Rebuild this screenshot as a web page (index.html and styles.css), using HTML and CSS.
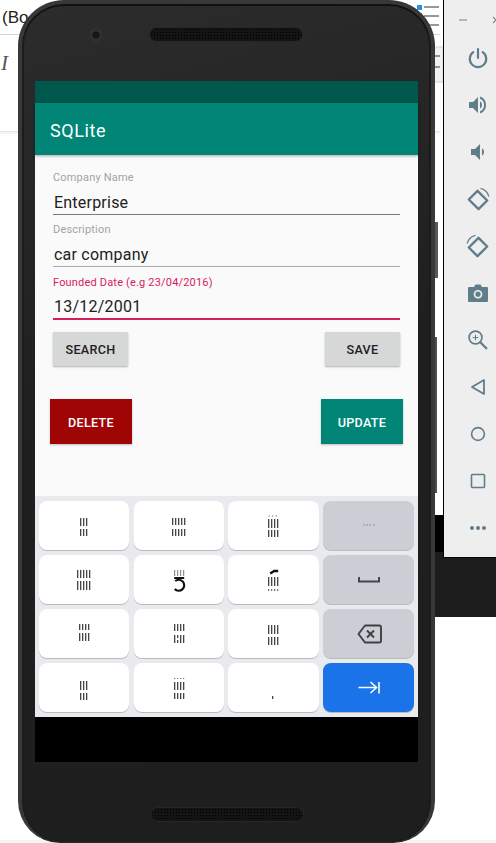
FILE: index.html
```html
<!DOCTYPE html>
<html lang="en">
<head>
<meta charset="utf-8">
<title>SQLite</title>
<link rel="stylesheet" href="styles.css">
</head>
<body>
<div class="desktop">
  <div class="doc">
    <div class="doc-tab"><span class="doc-title">(Bo</span></div>
    <div class="doc-sheet"><span class="doc-i">I</span></div>
  </div>
  <svg class="doc-tools" viewBox="0 0 30 90" width="30" height="90">
    <rect x="0" y="5" width="5" height="5" fill="#2b8fdc"/>
    <rect x="0" y="14" width="4" height="4" fill="#2b8fdc"/>
    <path d="M7 7h15M7 16h15M7 25h15" stroke="#333" stroke-width="1"/>
    <path d="M0 47h26v35H0z" fill="#f1f1f1" stroke="#bbb" stroke-width=".6"/>
    <path d="M18 56h5M18 67h5" stroke="#333" stroke-width="1"/>
  </svg>
  <div class="dark-strip"></div>
  <div class="black-strip"></div>
  <div class="foot-line"></div>

  <aside class="toolbar">
    <div class="win-controls">
      <span class="win-min"></span>
      <svg class="win-close" viewBox="0 0 8 8" width="8" height="8"><path d="M1 1l6 6M7 1L1 7" stroke="#6f8894" stroke-width="1.1"/></svg>
    </div>
    <div class="tool"><svg viewBox="0 0 24 24" width="24" height="24"><path d="M12 3v9" stroke="#607d8b" stroke-width="2.2" fill="none" stroke-linecap="round"/><path d="M7.3 6.2a8.2 8.2 0 1 0 9.4 0" stroke="#607d8b" stroke-width="2.2" fill="none" stroke-linecap="round"/></svg></div>
    <div class="tool"><svg viewBox="0 0 24 24" width="24" height="24"><path d="M3 9v6h4l5 5V4L7 9H3z" fill="#607d8b"/><path d="M14 8.2a4.5 4.5 0 0 1 0 7.6z" fill="#607d8b"/><path d="M14 3.5a9 9 0 0 1 0 17v-2.2a6.9 6.9 0 0 0 0-12.6z" fill="#607d8b"/></svg></div>
    <div class="tool"><svg viewBox="0 0 24 24" width="24" height="24"><path d="M5 9v6h4l5 5V4L9 9H5z" fill="#607d8b"/><path d="M16 8.2a4.5 4.5 0 0 1 0 7.6z" fill="#607d8b"/></svg></div>
    <div class="tool"><svg viewBox="0 0 24 24" width="24" height="24"><path d="M2.8 11.5l8.7-8.7 9.7 9.7-8.7 8.7z" transform="translate(0 1)" fill="none" stroke="#607d8b" stroke-width="2.4" stroke-linejoin="round"/><path d="M14.5 1.3A11 11 0 0 1 22.8 9.5" fill="none" stroke="#607d8b" stroke-width="1.3"/></svg></div>
    <div class="tool"><svg viewBox="0 0 24 24" width="24" height="24"><path d="M21.2 11.5l-8.7-8.7-9.7 9.7 8.7 8.7z" transform="translate(0 1)" fill="none" stroke="#607d8b" stroke-width="2.4" stroke-linejoin="round"/><path d="M9.5 1.3A11 11 0 0 0 1.2 9.5" fill="none" stroke="#607d8b" stroke-width="1.3"/></svg></div>
    <div class="tool"><svg viewBox="0 0 24 24" width="24" height="24"><path d="M3 6h5l1.5-2.5h5L16 6h5a1 1 0 0 1 1 1v13a1 1 0 0 1-1 1H3a1 1 0 0 1-1-1V7a1 1 0 0 1 1-1z" fill="#607d8b"/><circle cx="12" cy="13.2" r="4.3" fill="#eeeeee"/><circle cx="12" cy="13.2" r="2.6" fill="#607d8b"/></svg></div>
    <div class="tool"><svg viewBox="0 0 24 24" width="24" height="24"><circle cx="9.5" cy="9.5" r="6.4" fill="none" stroke="#607d8b" stroke-width="1.7"/><path d="M14.3 14.3l6 6" stroke="#607d8b" stroke-width="2.3" stroke-linecap="round"/><path d="M9.5 6.7v5.6M6.7 9.5h5.6" stroke="#607d8b" stroke-width="1.1"/></svg></div>
    <div class="tool"><svg viewBox="0 0 24 24" width="24" height="24"><path d="M6 12l12-7v14z" fill="none" stroke="#607d8b" stroke-width="1.8" stroke-linejoin="round"/></svg></div>
    <div class="tool"><svg viewBox="0 0 24 24" width="24" height="24"><circle cx="12" cy="12" r="6.4" fill="none" stroke="#607d8b" stroke-width="1.6"/></svg></div>
    <div class="tool"><svg viewBox="0 0 24 24" width="24" height="24"><rect x="5.5" y="5.5" width="13" height="13" rx="1" fill="none" stroke="#607d8b" stroke-width="1.6"/></svg></div>
    <div class="tool"><svg viewBox="0 0 24 24" width="24" height="24"><circle cx="6" cy="12" r="2" fill="#607d8b"/><circle cx="12" cy="12" r="2" fill="#607d8b"/><circle cx="18" cy="12" r="2" fill="#607d8b"/></svg></div>
  </aside>

  <div class="side-btn side-power"></div>
  <div class="side-btn side-volume"></div>

  <div class="phone">
    <div class="bezel-top">
      <span class="camera"></span>
      <span class="speaker speaker-top"></span>
    </div>
    <main class="screen">
      <div class="status-bar"></div>
      <header class="app-bar">SQLite</header>
      <section class="content">
        <form class="form">
          <div class="field">
            <label class="field-label">Company Name</label>
            <div class="field-value">Enterprise</div>
          </div>
          <div class="field">
            <label class="field-label">Description</label>
            <div class="field-value field-value-soft">car company</div>
          </div>
          <div class="field field-active">
            <label class="field-label">Founded Date (e.g 23/04/2016)</label>
            <div class="field-value">13/12/2001</div>
          </div>
          <div class="row row-plain">
            <button type="button" class="btn btn-plain">SEARCH</button>
            <button type="button" class="btn btn-plain">SAVE</button>
          </div>
          <div class="row row-color">
            <button type="button" class="btn btn-color btn-delete">DELETE</button>
            <button type="button" class="btn btn-color btn-update">UPDATE</button>
          </div>
        </form>
      </section>
      <section class="keyboard">
        <div class="key"><svg class="glyph" viewBox="0 0 90 49"><path class="bars" d="M41.5 17v8M44.5 17v8M47.5 17v8M41.5 28v7M44.5 28v7M47.5 28v7"/></svg></div>
        <div class="key"><svg class="glyph" viewBox="0 0 90 49"><path class="bars" d="M38.5 17v7M41.5 17v7M44.5 17v7M47.5 17v7M50.5 17v7M38.5 28v7M41.5 28v7M44.5 28v7M47.5 28v7M50.5 28v7"/></svg></div>
        <div class="key"><svg class="glyph" viewBox="0 0 90 49"><path class="dots" d="M40.5 15h1M44 15h1M47.5 15h1"/><path class="bars" d="M40.5 18v9M43.5 18v9M46.5 18v9M49.5 18v9M40.5 29v7M43.5 29v7M46.5 29v7M49.5 29v7"/></svg></div>
        <div class="key key-fn"><svg class="glyph" viewBox="0 0 90 49"><path class="dots" d="M40 24h1M43 24h1M46 24h1M50 24h1"/></svg></div>

        <div class="key"><svg class="glyph" viewBox="0 0 90 49"><path class="bars" d="M38.5 15v8M41.5 15v8M44.5 15v8M47.5 15v8M50.5 15v8M38.5 26v9M41.5 26v9M44.5 26v9M47.5 26v9M50.5 26v9"/></svg></div>
        <div class="key"><svg class="glyph" viewBox="0 0 90 49"><path class="bars-faint" d="M40.5 15v6M43.5 15v6M46.5 15v6M49.5 15v6"/><path class="five" d="M40 23h10M41 26a5.5 5.5 0 1 1-.5 8"/></svg></div>
        <div class="key"><svg class="glyph" viewBox="0 0 90 49"><path class="five-thin" d="M42 18.5l4-2.5h4"/><path class="bars" d="M40.5 22v9M43.5 22v9M46.5 22v9M49.5 22v9"/><path class="dots" d="M40.5 34v2M43.5 34v2M46.5 34v2M49.5 34v2"/></svg></div>
        <div class="key key-fn"><svg class="glyph" viewBox="0 0 90 49"><path class="space" d="M35.5 22v4.5h20V22"/></svg></div>

        <div class="key"><svg class="glyph" viewBox="0 0 90 49"><path class="bars" d="M40.5 15v6M43.5 15v6M46.5 15v6M49.5 15v6M40.5 24v8M43.5 24v8M46.5 24v8M49.5 24v8"/></svg></div>
        <div class="key"><svg class="glyph" viewBox="0 0 90 49"><path class="bars" d="M40.5 15v7M43.5 15v7M46.5 15v7M49.5 15v7M40.5 26v8M43.5 26v3M43.5 31v3M46.5 26v8M49.5 26v8"/></svg></div>
        <div class="key"><svg class="glyph" viewBox="0 0 90 49"><path class="bars" d="M40.5 16v9M43.5 16v9M46.5 16v9M49.5 16v9M40.5 28v8M43.5 28v8M46.5 28v8M49.5 28v8"/></svg></div>
        <div class="key key-fn"><svg class="glyph" viewBox="0 0 90 49"><path class="backspace" d="M41.5 16.5H56a1.5 1.5 0 0 1 1.5 1.5v14a1.5 1.5 0 0 1-1.5 1.5H41.5L35 25z"/><path class="backspace" d="M43.5 21.5l7 7M50.5 21.5l-7 7"/></svg></div>

        <div class="key"><svg class="glyph" viewBox="0 0 90 49"><path class="bars" d="M41.5 18v9M44.5 18v9M47.5 18v9M41.5 30v7M44.5 30v7M47.5 30v7"/></svg></div>
        <div class="key"><svg class="glyph" viewBox="0 0 90 49"><path class="dots" d="M40.5 15v1M43.5 15v1M46.5 15v1M49.5 15v1"/><path class="bars" d="M40.5 19v8M43.5 19v8M46.5 19v8M49.5 19v8M40.5 30v6M43.5 30v6M46.5 30v6M49.5 30v6"/></svg></div>
        <div class="key"><svg class="glyph" viewBox="0 0 90 49"><path class="bars" d="M44.5 33v3"/></svg></div>
        <div class="key key-go"><svg class="glyph" viewBox="0 0 90 49"><path class="go" d="M35 24.5h17M47 19l6 5.5-6 5.5M55.5 19v11.5"/></svg></div>
      </section>
      <div class="nav-bar"></div>
    </main>
    <div class="bezel-bottom">
      <span class="speaker speaker-bottom"></span>
    </div>
  </div>
</div>
</body>
</html>
```
FILE: styles.css
```css
* { box-sizing: border-box; }
html, body { margin: 0; padding: 0; }
body { background: #fff; font-family: Roboto, "Noto Sans", sans-serif; }

.desktop { position: relative; width: 496px; height: 843px; overflow: hidden; background: #fff; }

/* background window behind the emulator */
.doc { position: absolute; left: 0; top: 0; width: 440px; height: 132px; }
.doc-tab { height: 35px; border-bottom: 1px solid #d5d5d5; padding: 8px 0 0 2px; }
.doc-title { font: 17px "Liberation Sans", sans-serif; color: #222; }
.doc-sheet { height: 97px; border-bottom: 1px solid #e2e2e2; box-shadow: 0 2px 3px rgba(0,0,0,.06); padding: 16px 0 0 1px; }
.doc-i { font: italic 21px "Liberation Serif", serif; color: #555; display: inline-block; }
.doc-tools { position: absolute; left: 417px; top: 0; }
.dark-strip { position: absolute; left: 430px; top: 551px; width: 66px; height: 66px; background: #1d1d1d; }
.black-strip { position: absolute; left: 430px; top: 515px; width: 14px; height: 37px; background: #000; }
.foot-line { position: absolute; left: 0; right: 0; top: 840px; height: 3px; background: #f4f4f4; }

/* emulator side toolbar */
.toolbar {
  position: absolute; left: 443px; top: 0; width: 53px; height: 558px;
  background: #eeeeee; border-left: 1px solid #000; border-bottom: 1px solid #000;
  display: flex; flex-direction: column; align-items: center;
}
.win-controls { height: 35px; width: 100%; display: flex; align-items: center; padding: 4px 0 0 15px; gap: 25px; flex: none; }
.win-min { width: 8px; height: 2px; background: #a9bac2; flex: none; }
.win-close { flex: none; }
.tool { height: 47px; flex: none; width: 100%; display: flex; align-items: center; justify-content: center; padding-left: 16px; padding-bottom: 1px; }
.tool svg { flex: none; }

/* side keys */
.side-btn { position: absolute; left: 434px; width: 4px; background: #565656; }
.side-power { top: 222px; height: 56px; }
.side-volume { top: 337px; height: 156px; width: 3px; background: #4f4f4f; }

/* phone */
.phone {
  position: absolute; left: 18px; top: 0; width: 417px; height: 843px;
  border-radius: 46px 46px 42px 42px;
  background: linear-gradient(165deg, #2c2c2c 0, #1f1f1f 45%, #1e1e1e 100%);
  border: 4px solid #383838; border-bottom: 1px solid #2a2a2a;
  box-shadow: inset 0 2px 0 #111, inset 2px 0 0 #1b1b1b, inset -2px 0 0 #1b1b1b;
  display: flex; flex-direction: column; align-items: center;
}
.bezel-top { position: relative; width: 100%; height: 77px; flex: none; }
.bezel-bottom { position: relative; width: 100%; flex: 1; }
.camera {
  position: absolute; left: 67px; top: 24px; width: 14px; height: 14px; border-radius: 50%;
  background: radial-gradient(circle, #14141a 0 3px, #2f2f2f 4px 7px);
}
.speaker {
  position: absolute; width: 152px; height: 13px; border-radius: 7px;
  background-color: #141414;
  background-image: radial-gradient(circle, #000 0.7px, transparent 0.9px);
  background-size: 3px 3px;
  box-shadow: 0 0 0 1px #262626;
}
.speaker-top { left: 128px; top: 24px; }
.speaker-bottom { left: 129px; top: 46px; }

.screen { width: 383px; height: 681px; flex: none; display: flex; flex-direction: column; background: #fafafa; }
.status-bar { height: 22px; flex: none; background: #00574b; }
.app-bar {
  height: 52px; flex: none; background: #008577; color: #fff; font-size: 18px; font-weight: 400;
  line-height: 56px; padding-left: 15px; box-shadow: 0 1px 3px rgba(0,0,0,.35); position: relative; letter-spacing: .6px;
}
.content { height: 341px; flex: none; background: #fafafa; }
.form { padding: 16px 18px 0; display: flex; flex-direction: column; }
.field { height: 52.4px; display: flex; flex-direction: column; }
.field-label { font-size: 11px; line-height: 14px; color: #a3a3a3; flex: none; height: 14px; letter-spacing: .18px; }
.field-value {
  font-size: 16px; line-height: 22px; color: #212121; height: 29.5px; padding: 7px 0 0 1px;
  border-bottom: 1px solid #7a7a7a; flex: none; letter-spacing: .22px;
}
.field-value-soft { border-bottom-color: #a8a8a8; }
.field-active .field-label { color: #d81b60; }
.field-active .field-value { border-bottom: 2px solid #d81b60; height: 30px; padding-top: 6px; }
.row { display: flex; justify-content: space-between; }
.btn {
  border: 0; font-family: Roboto, sans-serif; font-weight: 500; font-size: 12.6px; padding: 0;
  border-radius: 1px; letter-spacing: .3px;
}
.row-plain { margin-top: 3.5px; }
.btn-plain { width: 75px; height: 34px; padding-top: 1px; background: #d6d7d7; color: #212121; box-shadow: 0 1px 2px rgba(0,0,0,.3); }
.row-color { margin: 33px -3px 0 -3px; }
.btn-color { width: 82px; height: 45px; padding-top: 3px; color: #fff; border-radius: 0; box-shadow: 0 1px 2px rgba(0,0,0,.25); }
.btn-delete { background: #a00505; }
.btn-update { background: #008577; }

.keyboard {
  height: 221px; flex: none; background: #e8eaed; padding: 5px 4px;
  display: grid; grid-template-columns: 90.4px 90.4px 90.4px 91px; grid-auto-rows: 49px; gap: 5px 4.3px;
}
.key { background: #fff; border-radius: 8px; box-shadow: 0 1px 0 #b9bbbe; display: block; overflow: hidden; }
.key-fn { background: #ccced5; }
.key-go { background: #1a73e8; }
.glyph { display: block; width: 100%; height: 100%; }
.bars { stroke: #333; stroke-width: 1.2; fill: none; }
.bars-faint { stroke: #777; stroke-width: 1; fill: none; }
.dots { stroke: #555; stroke-width: 1; fill: none; }
.five { stroke: #111; stroke-width: 2.2; fill: none; }
.five-thin { stroke: #111; stroke-width: 2.4; fill: none; }
.space { stroke: #45474a; stroke-width: 2; fill: none; }
.backspace { stroke: #3c4043; stroke-width: 1.9; fill: none; stroke-linejoin: round; }
.go { stroke: #fff; stroke-width: 1.6; fill: none; }

.nav-bar { height: 45px; flex: none; background: #000; }
```
